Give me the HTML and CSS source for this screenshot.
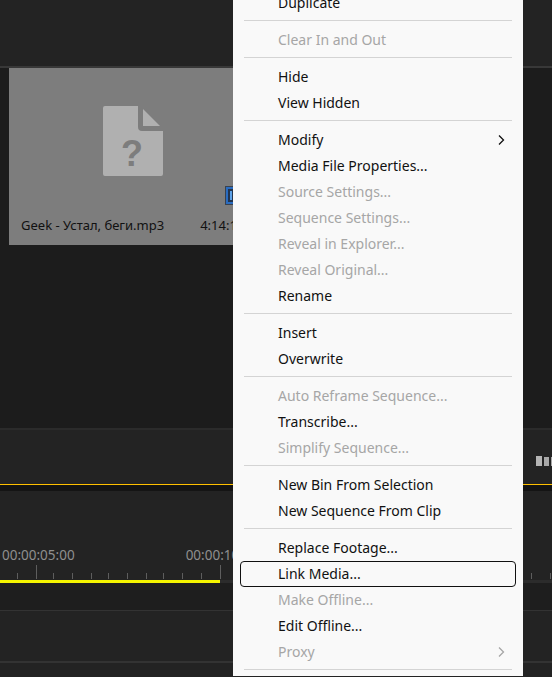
FILE: index.html
```html
<!DOCTYPE html>
<html>
<head>
  <title>Project panel menu</title>
  <link rel="stylesheet" href="styles.css">
</head>
<body>
  <div class="app">
    <div class="top-bar"></div>
    <div class="project-panel">
      <div class="thumb">
        <div class="thumb-art">
          <svg class="doc-icon" width="60" height="70" viewBox="0 0 60 70">
            <path d="M2 0H35V21a4 4 0 0 0 4 4H60V68a2 2 0 0 1-2 2H2a2 2 0 0 1-2-2V2a2 2 0 0 1 2-2Z" fill="#b0b0b0"/>
            <path d="M40 3L57 20H40Z" fill="#b0b0b0"/>
            <text x="29" y="60" class="doc-mark">?</text>
          </svg>
        </div>
        <div class="badge"><span class="badge-mark"></span></div>
        <div class="thumb-info">
          <span class="thumb-name">Geek - Устал, беги.mp3</span>
          <span class="thumb-time">4:14:14</span>
        </div>
      </div>
    </div>
    <div class="tool-strip">
      <div class="strip-icons"><i></i><i></i><i></i></div>
    </div>
    <div class="gold-line"></div>
    <div class="dark-gap"></div>
    <div class="ruler">
      <div class="ruler-labels"><span>00:00:05:00</span><span>00:00:10:00</span></div>
      <svg class="ticks" width="552" height="18" viewBox="0 0 552 18">
        <g stroke="#5e5e5e" stroke-width="1">
          <path d="M17.5 8V14M36.5 0V14M53.5 8V14M72.5 8V14M91.5 8V14M108.5 8V14M127.5 8V14M146.5 8V14M163.5 8V14M182.5 8V14M201.5 8V14M220.5 0V14"/>
          <path d="M531.5 8V14M550.5 8V14"/>
        </g>
      </svg>
      <div class="work-area"><div class="work-fill"></div></div>
    </div>
    <div class="track-a"></div>
    <div class="track-b"></div>
    <div class="track-c"></div>
  </div>

  <div class="menu">
    <div class="item">Duplicate</div>
    <div class="sep"></div>
    <div class="item off">Clear In and Out</div>
    <div class="sep"></div>
    <div class="item">Hide</div>
    <div class="item">View Hidden</div>
    <div class="sep"></div>
    <div class="item">Modify
      <svg class="arrow" width="7" height="10" viewBox="0 0 7 10"><path d="M1 .5L5.500 5L1 9.500" fill="none" stroke="currentColor" stroke-width="1.300"/></svg>
    </div>
    <div class="item">Media File Properties...</div>
    <div class="item off">Source Settings...</div>
    <div class="item off">Sequence Settings...</div>
    <div class="item off">Reveal in Explorer...</div>
    <div class="item off">Reveal Original...</div>
    <div class="item">Rename</div>
    <div class="sep"></div>
    <div class="item">Insert</div>
    <div class="item">Overwrite</div>
    <div class="sep"></div>
    <div class="item off">Auto Reframe Sequence...</div>
    <div class="item">Transcribe...</div>
    <div class="item off">Simplify Sequence...</div>
    <div class="sep"></div>
    <div class="item">New Bin From Selection</div>
    <div class="item">New Sequence From Clip</div>
    <div class="sep"></div>
    <div class="item">Replace Footage...</div>
    <div class="item focus">Link Media...</div>
    <div class="item off">Make Offline...</div>
    <div class="item">Edit Offline...</div>
    <div class="item off">Proxy
      <svg class="arrow" width="7" height="10" viewBox="0 0 7 10"><path d="M1 .5L5.500 5L1 9.500" fill="none" stroke="currentColor" stroke-width="1.300"/></svg>
    </div>
    <div class="sep"></div>
  </div>
</body>
</html>
```

FILE: styles.css
```css
html, body {
  margin: 0;
  height: 677px;
  overflow: hidden;
  background: #232323;
}
body {
  font-family: "Noto Sans", "Open Sans", sans-serif;
  position: relative;
}
.app {
  display: flex;
  flex-direction: column;
  height: 677px;
}
.top-bar {
  height: 66px;
  background: #232323;
  border-bottom: 2px solid #383838;
}
.project-panel {
  height: 360px;
  background: #1c1c1c;
  border-bottom: 2px solid #2b2b2b;
  padding-left: 9px;
}
.thumb {
  position: relative;
  width: 240px;
  height: 177px;
  background: #7d7d7d;
}
.thumb-art {
  display: flex;
  padding: 38px 0 0 94px;
}
.doc-mark {
  font-family: "Liberation Sans", sans-serif;
  font-size: 36px;
  font-weight: 700;
  fill: #7d7d7d;
  text-anchor: middle;
}
.badge {
  position: absolute;
  left: 216px;
  top: 118px;
  width: 18px;
  height: 19px;
  box-sizing: border-box;
  border: 1px solid #39424f;
  outline: 2px solid #2a6cc0;
  outline-offset: -3px;
  background: #22344e;
}
.badge-mark {
  display: block;
  width: 2px;
  height: 9px;
  margin: 4px 0 0 4px;
  background: #5ea2e8;
}
.thumb-info {
  position: absolute;
  left: 12px;
  top: 148px;
  display: flex;
  gap: 36px;
  font-size: 13px;
  line-height: 18px;
  color: #111;
  white-space: nowrap;
}
.tool-strip {
  height: 54px;
  background: #232323;
  display: flex;
  justify-content: flex-end;
  align-items: center;
}
.strip-icons {
  display: flex;
  align-items: flex-end;
  gap: 2px;
  margin: 8px -4px 0 0;
  width: 20px;
}
.strip-icons i {
  display: block;
  width: 5px;
  height: 9px;
  background: #a8a8a8;
}
.strip-icons i:first-child {
  width: 6px;
  height: 10px;
  background: #b4b4b4;
}
.gold-line {
  height: 1px;
  background: #ffc000;
}
.dark-gap {
  height: 6px;
  background: #141414;
}
.ruler {
  position: relative;
  height: 92px;
  background: #232323;
}
.ruler-labels {
  position: absolute;
  left: 2px;
  top: 55px;
  display: flex;
  gap: 111px;
  font-size: 13.500px;
  line-height: 18px;
  color: #8f8f8f;
  white-space: nowrap;
}
.ticks {
  position: absolute;
  left: 0;
  top: 74px;
}
.work-area {
  position: absolute;
  left: 0;
  right: 0;
  bottom: 0;
  height: 3px;
  background: #2c2c2c;
}
.work-fill {
  width: 220px;
  height: 3px;
  background: #f5f500;
}
.track-a {
  height: 27px;
  background: #1e1e1e;
  border-bottom: 1px solid #333;
}
.track-b {
  height: 50px;
  background: #232323;
  border-bottom: 2px solid #333;
}
.track-c {
  flex: 1;
  background: #232323;
}
.menu {
  position: absolute;
  left: 233px;
  top: -10px;
  width: 290px;
  background: #f9f9f9;
  color: #111;
  font-size: 14px;
}
.item {
  position: relative;
  height: 26px;
  line-height: 26px;
  padding-left: 45px;
  white-space: nowrap;
}
.off {
  color: #a6a6a6;
}
.focus::before {
  content: "";
  position: absolute;
  left: 7px;
  right: 7px;
  top: 0;
  bottom: 0;
  border: 1.500px solid #111;
  border-radius: 4px;
}
.arrow {
  position: absolute;
  right: 18px;
  top: 8px;
}
.sep {
  height: 1px;
  margin: 4px 11px 6px;
  background: #d4d4d4;
}
```
